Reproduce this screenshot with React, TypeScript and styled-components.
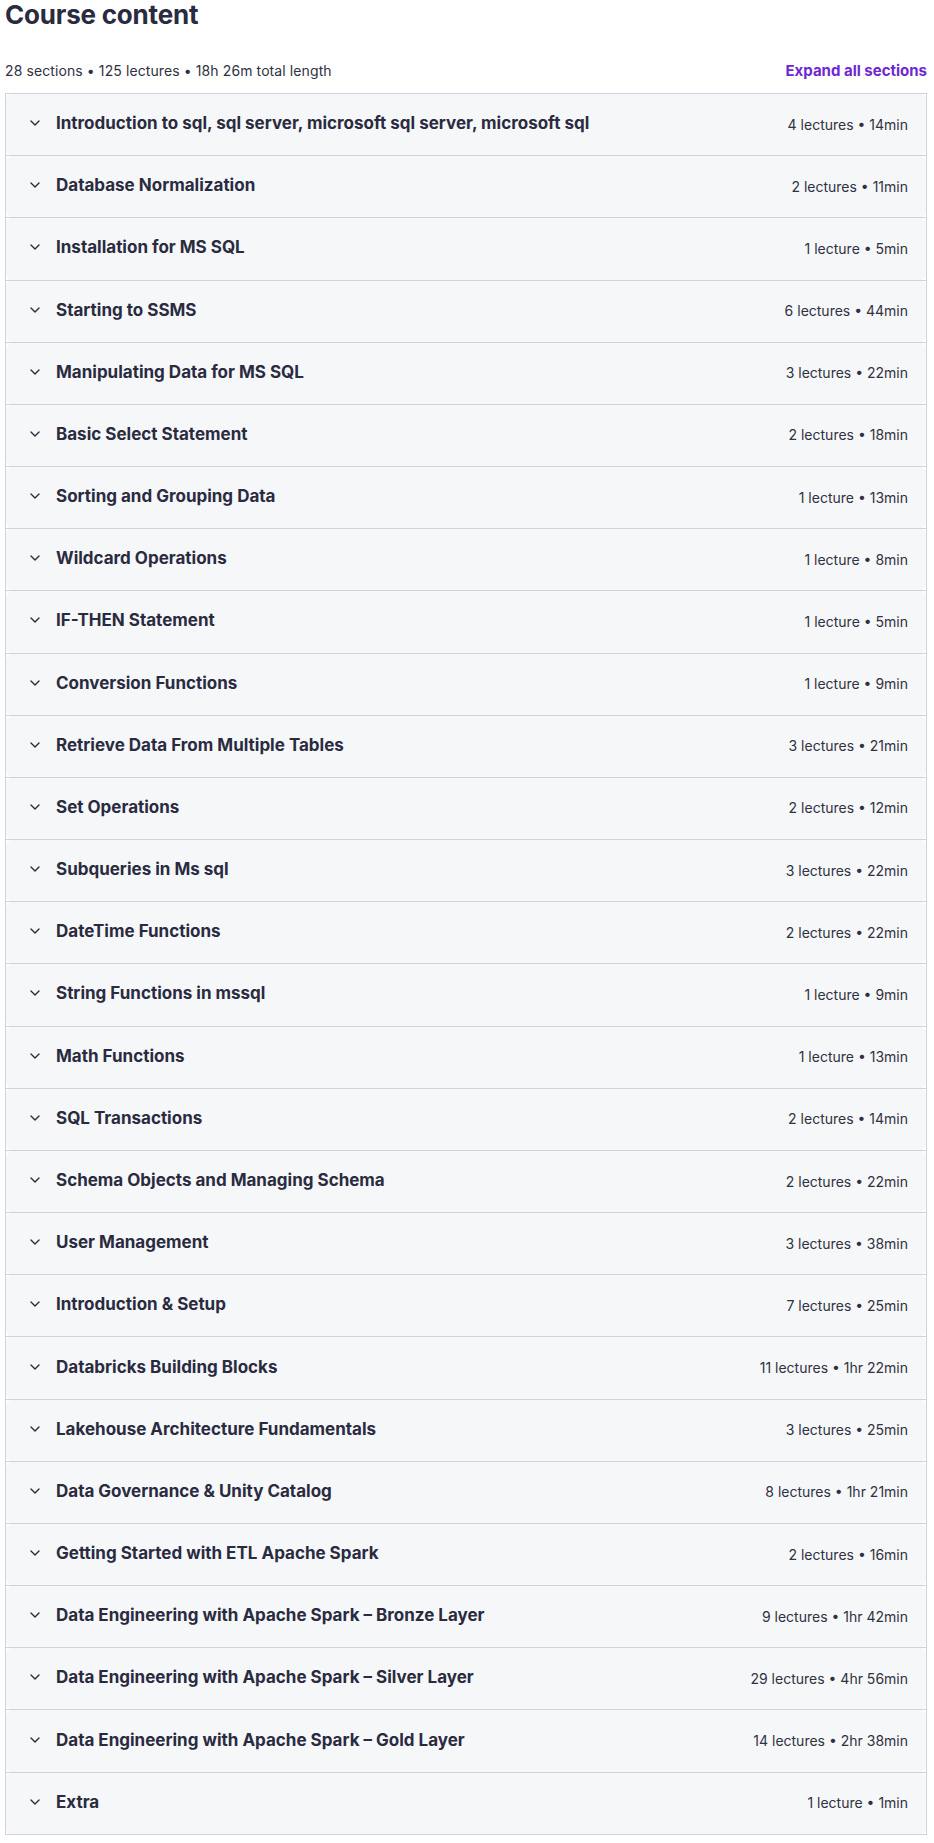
import React from 'react';
import styled, { createGlobalStyle } from 'styled-components';

interface Section {
  title: string;
  lectures: number;
  length: string;
}

const sections: Section[] = [
  { title: 'Introduction to sql, sql server, microsoft sql server, microsoft sql', lectures: 4, length: '14min' },
  { title: 'Database Normalization', lectures: 2, length: '11min' },
  { title: 'Installation for MS SQL', lectures: 1, length: '5min' },
  { title: 'Starting to SSMS', lectures: 6, length: '44min' },
  { title: 'Manipulating Data for MS SQL', lectures: 3, length: '22min' },
  { title: 'Basic Select Statement', lectures: 2, length: '18min' },
  { title: 'Sorting and Grouping Data', lectures: 1, length: '13min' },
  { title: 'Wildcard Operations', lectures: 1, length: '8min' },
  { title: 'IF-THEN Statement', lectures: 1, length: '5min' },
  { title: 'Conversion Functions', lectures: 1, length: '9min' },
  { title: 'Retrieve Data From Multiple Tables', lectures: 3, length: '21min' },
  { title: 'Set Operations', lectures: 2, length: '12min' },
  { title: 'Subqueries in Ms sql', lectures: 3, length: '22min' },
  { title: 'DateTime Functions', lectures: 2, length: '22min' },
  { title: 'String Functions in mssql', lectures: 1, length: '9min' },
  { title: 'Math Functions', lectures: 1, length: '13min' },
  { title: 'SQL Transactions', lectures: 2, length: '14min' },
  { title: 'Schema Objects and Managing Schema', lectures: 2, length: '22min' },
  { title: 'User Management', lectures: 3, length: '38min' },
  { title: 'Introduction & Setup', lectures: 7, length: '25min' },
  { title: 'Databricks Building Blocks', lectures: 11, length: '1hr 22min' },
  { title: 'Lakehouse Architecture Fundamentals', lectures: 3, length: '25min' },
  { title: 'Data Governance & Unity Catalog', lectures: 8, length: '1hr 21min' },
  { title: 'Getting Started with ETL Apache Spark', lectures: 2, length: '16min' },
  { title: 'Data Engineering with Apache Spark – Bronze Layer', lectures: 9, length: '1hr 42min' },
  { title: 'Data Engineering with Apache Spark – Silver Layer', lectures: 29, length: '4hr 56min' },
  { title: 'Data Engineering with Apache Spark – Gold Layer', lectures: 14, length: '2hr 38min' },
  { title: 'Extra', lectures: 1, length: '1min' },
];

const GlobalStyle = createGlobalStyle`
  body {
    margin: 0;
    background: #ffffff;
    font-family: Inter, "Liberation Sans", sans-serif;
    color: #2a2b3f;
  }
`;

const Page = styled.div`
  width: 922px;
  padding: 0 7px 0 5px;
`;

const Heading = styled.h2`
  margin: 0;
  font-size: 26px;
  line-height: 29px;
  font-weight: 700;
  letter-spacing: -0.2px;
  color: #2a2b3f;
`;

const SummaryBar = styled.div`
  display: flex;
  justify-content: space-between;
  align-items: center;
  margin-top: 32px;
  margin-bottom: 12px;
  font-size: 14px;
  line-height: 20px;
`;

const Summary = styled.span`
  color: #303141;
  letter-spacing: 0.1px;
`;

const ExpandButton = styled.button`
  border: none;
  background: none;
  padding: 0;
  font-family: inherit;
  font-size: 15px;
  line-height: 20px;
  font-weight: 700;
  color: #6d28d2;
  cursor: pointer;
`;

const SectionList = styled.div`
  border: 1px solid #d1d2e0;
  border-top: none;
`;

const SectionItem = styled.div`
  height: 62.18px;
  box-sizing: border-box;
  border-top: 1px solid #d1d2e0;
  background: #ffffff;
`;

const SectionHeader = styled.button`
  display: flex;
  align-items: center;
  width: 100%;
  height: 100%;
  padding: 0 18px 0 24px;
  box-sizing: border-box;
  border: none;
  border-radius: 6px;
  background: #f6f7f9;
  font-family: inherit;
  text-align: left;
  cursor: pointer;
`;

const Chevron = styled.svg`
  flex: none;
  width: 10px;
  height: 6px;
  margin-right: 16px;
  margin-top: -3px;
`;

const SectionTitle = styled.span`
  flex: 1;
  font-size: 17px;
  line-height: 22px;
  font-weight: 700;
  color: #2a2b3f;
  margin-top: -3px;
`;

const SectionMeta = styled.span`
  flex: none;
  font-size: 14px;
  line-height: 20px;
  color: #303141;
`;

const ChevronIcon = () => (
  <Chevron viewBox="0 0 10 6" fill="none">
    <path d="M1 1l4 4 4-4" stroke="#2a2b3f" strokeWidth="1.4" strokeLinecap="round" strokeLinejoin="round" />
  </Chevron>
);

const App: React.FC = () => {
  return (
    <Page>
      <GlobalStyle />
      <Heading>Course content</Heading>
      <SummaryBar>
        <Summary>28 sections • 125 lectures • 18h 26m total length</Summary>
        <ExpandButton>Expand all sections</ExpandButton>
      </SummaryBar>
      <SectionList>
        {sections.map((section) => (
          <SectionItem key={section.title}>
            <SectionHeader>
              <ChevronIcon />
              <SectionTitle>{section.title}</SectionTitle>
              <SectionMeta>
                {section.lectures} {section.lectures === 1 ? 'lecture' : 'lectures'} • {section.length}
              </SectionMeta>
            </SectionHeader>
          </SectionItem>
        ))}
      </SectionList>
    </Page>
  );
};

export default App;
